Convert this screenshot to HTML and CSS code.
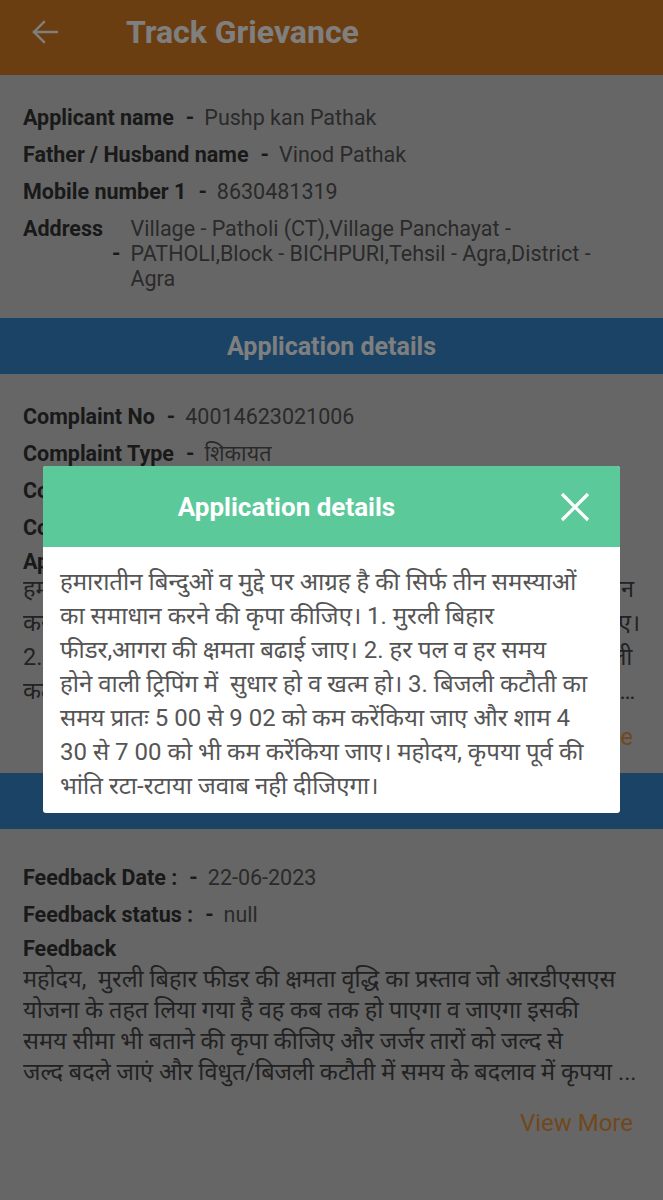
FILE: index.html
```html
<!DOCTYPE html>
<html lang="hi">
<head>
<meta charset="utf-8">
<title>Track Grievance</title>
<link rel="stylesheet" href="styles.css">
</head>
<body>
<div class="page">
  <header class="appbar">
    <span class="back">
      <svg width="26" height="24" viewBox="0 0 26 24" aria-hidden="true">
        <path d="M25 12H2M12 2L2 12l10 10" fill="none" stroke="#ffffff" stroke-width="2.4" stroke-linecap="square"/>
      </svg>
    </span>
    <h1 class="title">Track Grievance</h1>
  </header>

  <section class="info">
    <div class="row"><span class="label">Applicant name</span><span class="dash">-</span><span class="value">Pushp kan Pathak</span></div>
    <div class="row"><span class="label">Father / Husband name</span><span class="dash">-</span><span class="value">Vinod Pathak</span></div>
    <div class="row"><span class="label">Mobile number 1</span><span class="dash">-</span><span class="value">8630481319</span></div>
    <div class="row row-addr"><span class="label">Address</span><span class="dash dash-mid">-</span><span class="value">Village - Patholi (CT),Village Panchayat - PATHOLI,Block - BICHPURI,Tehsil - Agra,District - Agra</span></div>
  </section>

  <div class="band">Application details</div>

  <section class="info info-app">
    <div class="row"><span class="label">Complaint No</span><span class="dash">-</span><span class="value">40014623021006</span></div>
    <div class="row"><span class="label">Complaint Type</span><span class="dash">-</span><span class="value">शिकायत</span></div>
    <div class="row"><span class="label">Complaint Date</span><span class="dash">-</span><span class="value">22-06-2023</span></div>
    <div class="row"><span class="label">Complaint Status</span><span class="dash">-</span><span class="value">Pending</span></div>
    <div class="block-label">Application details</div>
    <p class="hindi hindi-app clamp">हमारातीन बिन्दुओं व मुद्दे पर आग्रह है की सिर्फ तीन समस्याओं का समाधान<br>करने की कृपा कीजिए। 1. मुरली बिहार फीडर,आगरा की क्षमता बढाई जाए।<br>2. हर पल व हर समय होने वाली ट्रिपिंग में  सुधार हो व खत्म हो। 3. बिजली<br>कटौती का समय प्रातः 5 00 से 9 02 को कम करेंकिया जाए और शाम 4 30 से 7 00 को भी कम करेंकिया जाए। महोदय, कृपया पूर्व की भांति रटा-रटाया जवाब नही दीजिएगा।</p>
    <div class="more">View More</div>
  </section>

  <div class="band">Feedback details</div>

  <section class="info info-fb">
    <div class="row"><span class="label">Feedback Date :</span><span class="dash">-</span><span class="value">22-06-2023</span></div>
    <div class="row"><span class="label">Feedback status :</span><span class="dash">-</span><span class="value">null</span></div>
    <div class="block-label">Feedback</div>
    <p class="hindi hindi-fb clamp">महोदय,  मुरली बिहार फीडर की क्षमता वृद्धि का प्रस्ताव जो आरडीएसएस<br>योजना के तहत लिया गया है वह कब तक हो पाएगा व जाएगा इसकी<br>समय सीमा भी बताने की कृपा कीजिए और जर्जर तारों को जल्द से<br>जल्द बदले जाएं और विधुत/बिजली कटौती में समय के बदलाव में कृपया ...</p>
    <div class="more more-fb">View More</div>
  </section>
</div>

<div class="scrim"></div>

<div class="dialog" role="dialog" aria-label="Application details">
  <div class="dialog-head">
    <div class="dialog-title">Application details</div>
    <button class="dialog-close" aria-label="Close">
      <svg width="30" height="30" viewBox="0 0 30 30" aria-hidden="true">
        <path d="M2 2L28 28M28 2L2 28" fill="none" stroke="#ffffff" stroke-width="3.2"/>
      </svg>
    </button>
  </div>
  <div class="dialog-body">हमारातीन बिन्दुओं व मुद्दे पर आग्रह है की सिर्फ तीन समस्याओं<br>का समाधान करने की कृपा कीजिए। 1. मुरली बिहार<br>फीडर,आगरा की क्षमता बढाई जाए। 2. हर पल व हर समय<br>होने वाली ट्रिपिंग में  सुधार हो व खत्म हो। 3. बिजली कटौती का<br>समय प्रातः 5 00 से 9 02 को कम करेंकिया जाए और शाम 4<br>30 से 7 00 को भी कम करेंकिया जाए। महोदय, कृपया पूर्व की<br>भांति रटा-रटाया जवाब नही दीजिएगा।</div>
</div>
</body>
</html>
```

FILE: styles.css
```css
* { box-sizing: border-box; }

html, body {
  margin: 0;
  padding: 0;
}

body {
  width: 663px;
  height: 1200px;
  overflow: hidden;
  background: #cdcdcd;
  font-family: Roboto, "Noto Sans", "Noto Sans Devanagari", "Lohit Devanagari", sans-serif;
  color: #555555;
}

.page {
  background: #cdcdcd;
  min-height: 1200px;
}

.appbar {
  height: 75px;
  background: #d67c24;
  display: flex;
  align-items: center;
  padding: 0 0 12px 32px;
}

.back {
  display: flex;
  width: 26px;
  height: 24px;
}

.title {
  margin: 0 0 0 68px;
  font-size: 32px;
  font-weight: 700;
  color: #ffffff;
  line-height: 1;
}

.info {
  padding: 30px 23px 0 23px;
}

.row {
  display: flex;
  font-size: 21.5px;
  line-height: 25px;
  margin-bottom: 12px;
}

.label {
  font-weight: 700;
  color: #333333;
  white-space: nowrap;
}

.dash {
  font-weight: 700;
  color: #333333;
  margin: 0 10px 0 12px;
}

.dash-mid {
  align-self: center;
  margin: 0 10px 0 9px;
}

.value {
  color: #555555;
}

.row-addr {
  margin-bottom: 27px;
}

.band {
  height: 56px;
  background: #3486cc;
  color: #ffffff;
  font-size: 25px;
  font-weight: 700;
  display: flex;
  align-items: center;
  justify-content: center;
}

.info-app {
  padding-top: 30px;
}

.block-label {
  font-size: 21.5px;
  line-height: 20px;
  font-weight: 700;
  color: #333333;
}

.hindi {
  margin: 0;
  font-size: 23.5px;
  line-height: 34px;
  color: #444444;
  white-space: pre-wrap;
}

.hindi-app {
  margin-right: -4px;
}

.hindi-fb {
  line-height: 31px;
  margin-top: 5px;
  margin-right: -10px;
}

.clamp {
  display: -webkit-box;
  -webkit-box-orient: vertical;
  -webkit-line-clamp: 4;
  overflow: hidden;
}

.more {
  text-align: right;
  font-size: 24px;
  line-height: 30px;
  color: #e0903c;
  padding: 14px 7px 0 0;
  margin-bottom: 21px;
}

.more-fb {
  padding-top: 20px;
}

.info-fb {
  padding-top: 36px;
}

.scrim {
  position: fixed;
  inset: 0;
  background: rgba(0, 0, 0, 0.5);
}

.dialog {
  position: fixed;
  left: 43px;
  top: 466px;
  width: 577px;
  background: #ffffff;
  border-radius: 3px;
  overflow: hidden;
}

.dialog-head {
  height: 81px;
  background: #5cc99b;
  display: flex;
  align-items: center;
}

.dialog-title {
  flex: 1;
  text-align: center;
  color: #ffffff;
  font-size: 26px;
  font-weight: 700;
}

.dialog-close {
  width: 90px;
  height: 81px;
  border: 0;
  padding: 0;
  background: transparent;
  display: flex;
  align-items: center;
  justify-content: center;
}

.dialog-body {
  padding: 18px 8px 10px 17px;
  font-size: 24px;
  line-height: 34px;
  color: #555555;
  white-space: pre-wrap;
}
```
